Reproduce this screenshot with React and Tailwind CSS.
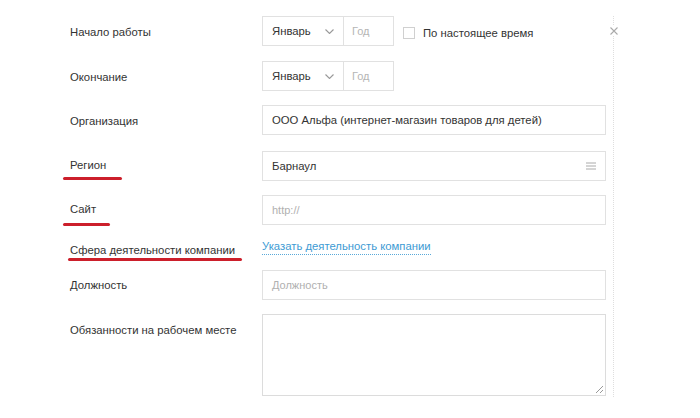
import React from 'react';

const font = { fontFamily: '"Liberation Sans", Arial, sans-serif' };

function Label({ children, mark, top }) {
  return (
    <div className="relative w-[192px] shrink-0 text-[11.3px] text-[#333]" style={{ paddingTop: top }}>
      {children}
      {mark && (
        <span
          className="absolute h-[3px] rounded-full bg-[#cc1f2b]"
          style={{ left: mark.left, width: mark.width, top: mark.top }}
        />
      )}
    </div>
  );
}

function MonthYear() {
  return (
    <div className="flex h-[30px] border border-[#e1e1e1]">
      <div className="flex w-[81px] items-center justify-between border-r border-[#e1e1e1] pl-[9px] pr-[9px] text-[11.3px] text-[#333]">
        <span>Январь</span>
        <svg width="9" height="5" viewBox="0 0 9 5" fill="none">
          <path d="M0.5 0.5l4 4 4-4" stroke="#999" strokeWidth="1.1" />
        </svg>
      </div>
      <div className="flex w-[49px] items-center pl-[8px] text-[11px] text-[#b5b5b5]">Год</div>
    </div>
  );
}

function TextBox({ children, muted, right }) {
  return (
    <div
      className={`flex h-[30px] w-[344px] items-center justify-between border border-[#e1e1e1] pl-[9px] pr-[9px] ${
        muted ? 'text-[11px] text-[#b0b0b0]' : 'text-[11.3px] text-[#333]'
      }`}
    >
      <span>{children}</span>
      {right}
    </div>
  );
}

export default function App() {
  return (
    <div className="min-h-screen bg-white" style={font}>
      <div className="flex pt-[16px]">
        {/* Form */}
        <div className="w-[606px] shrink-0 pl-[70px]">
          <div className="flex h-[30px] items-start">
            <Label top={8}>Начало работы</Label>
            <MonthYear />
            <div className="ml-[9px] flex items-center pt-[9px]">
              <span className="h-[12px] w-[12px] border border-[#d0d0d0] bg-white" />
              <span className="ml-[8px] text-[11.3px] text-[#333]">По настоящее время</span>
            </div>
          </div>

          <div className="mt-[15px] flex items-start">
            <Label top={8}>Окончание</Label>
            <MonthYear />
          </div>

          <div className="mt-[14px] flex items-start">
            <Label top={8}>Организация</Label>
            <TextBox>ООО Альфа (интернет-магазин товаров для детей)</TextBox>
          </div>

          <div className="mt-[16px] flex items-start">
            <Label top={6} mark={{ left: -7, width: 59, top: 26 }}>Регион</Label>
            <TextBox
              right={
                <svg width="10" height="8" viewBox="0 0 10 8">
                  <path d="M0 1h10M0 4h10M0 7h10" stroke="#aaa" strokeWidth="1" />
                </svg>
              }
            >
              Барнаул
            </TextBox>
          </div>

          <div className="mt-[14px] flex items-start">
            <Label top={6} mark={{ left: -7, width: 47, top: 28 }}>Сайт</Label>
            <TextBox muted>http://</TextBox>
          </div>

          <div className="mt-[13px] flex h-[18px] items-start">
            <Label top={4} mark={{ left: -2, width: 174, top: 20 }}>Сфера деятельности компании</Label>
            <a className="mt-[1px] border-b border-dotted border-[#59a9d9] text-[11.3px] leading-[15px] text-[#3d9bd4]">
              Указать деятельность компании
            </a>
          </div>

          <div className="mt-[14px] flex items-start">
            <Label top={7}>Должность</Label>
            <TextBox muted>Должность</TextBox>
          </div>

          <div className="mt-[14px] flex items-start">
            <Label top={8}>Обязанности на рабочем месте</Label>
            <div className="relative h-[82px] w-[344px] border border-[#dcdcdc]">
              <svg className="absolute bottom-[1px] right-[1px]" width="10" height="10" viewBox="0 0 10 10">
                <path d="M9 2L2 9M9 6L6 9" stroke="#999" strokeWidth="1" />
              </svg>
            </div>
          </div>
        </div>

        {/* Divider column */}
        <div className="relative ml-[7px] h-[381px] border-l border-dotted border-[#dedede]">
          <svg className="absolute left-[-5px] top-[10px] bg-white" width="10" height="10" viewBox="0 0 10 10">
            <path d="M1.5 1.5l7 7M8.5 1.5l-7 7" stroke="#aaa" strokeWidth="1.1" />
          </svg>
        </div>
      </div>
    </div>
  );
}
